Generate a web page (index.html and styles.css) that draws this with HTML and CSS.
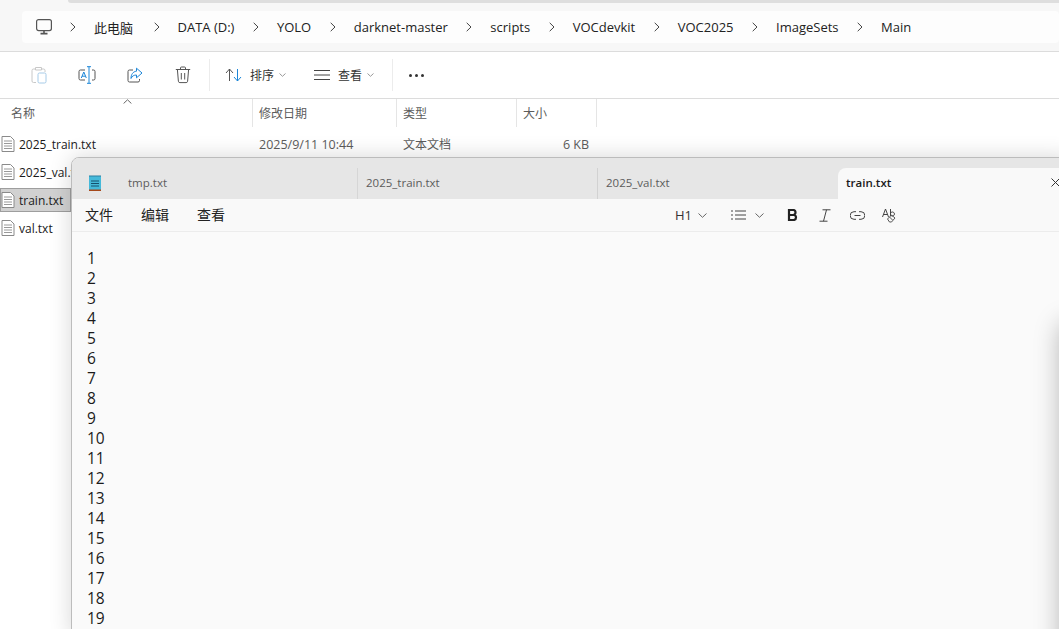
FILE: index.html
```html
<!DOCTYPE html>
<html lang="zh-CN">
<head>
<meta charset="UTF-8">
<meta name="viewport" content="width=device-width,initial-scale=1.0">
<title>train.txt</title>
<link rel="stylesheet" href="styles.css">
</head>
<body>

<!-- ===== explorer ===== -->
<div class="explorer">
  <div class="topbar">
    <div class="topline"></div>
    <div class="address">
      <svg class="pc" width="18" height="18" viewBox="0 0 18 18" fill="none" stroke="#555" stroke-width="1.2"><rect x="1.6" y="1.6" width="14.8" height="11" rx="2"/><path d="M5.5 15.6h7M9 12.6v3" stroke-width="1.6"/></svg>
      <span class="sep"><svg width="6" height="10" viewBox="0 0 6 10" fill="none" stroke="#444" stroke-width="1"><path d="M.7.8 5 5 .7 9.2"/></svg></span><span class="crumb crumb-root">此电脑</span>
      <span class="sep"><svg width="6" height="10" viewBox="0 0 6 10" fill="none" stroke="#444" stroke-width="1"><path d="M.7.8 5 5 .7 9.2"/></svg></span><span class="crumb">DATA (D:)</span>
      <span class="sep"><svg width="6" height="10" viewBox="0 0 6 10" fill="none" stroke="#444" stroke-width="1"><path d="M.7.8 5 5 .7 9.2"/></svg></span><span class="crumb">YOLO</span>
      <span class="sep"><svg width="6" height="10" viewBox="0 0 6 10" fill="none" stroke="#444" stroke-width="1"><path d="M.7.8 5 5 .7 9.2"/></svg></span><span class="crumb">darknet-master</span>
      <span class="sep"><svg width="6" height="10" viewBox="0 0 6 10" fill="none" stroke="#444" stroke-width="1"><path d="M.7.8 5 5 .7 9.2"/></svg></span><span class="crumb">scripts</span>
      <span class="sep"><svg width="6" height="10" viewBox="0 0 6 10" fill="none" stroke="#444" stroke-width="1"><path d="M.7.8 5 5 .7 9.2"/></svg></span><span class="crumb">VOCdevkit</span>
      <span class="sep"><svg width="6" height="10" viewBox="0 0 6 10" fill="none" stroke="#444" stroke-width="1"><path d="M.7.8 5 5 .7 9.2"/></svg></span><span class="crumb">VOC2025</span>
      <span class="sep"><svg width="6" height="10" viewBox="0 0 6 10" fill="none" stroke="#444" stroke-width="1"><path d="M.7.8 5 5 .7 9.2"/></svg></span><span class="crumb">ImageSets</span>
      <span class="sep"><svg width="6" height="10" viewBox="0 0 6 10" fill="none" stroke="#444" stroke-width="1"><path d="M.7.8 5 5 .7 9.2"/></svg></span><span class="crumb">Main</span>
    </div>
  </div>

  <div class="toolbar">
    <span class="tool tool-first">
      <svg width="16" height="18" viewBox="0 0 16 18" fill="none"><path d="M4 3H2.500A1.500 1.500 0 0 0 1 4.500V15a1.500 1.500 0 0 0 1.500 1.500H5M11 3h1.500A1.500 1.500 0 0 1 14 4.500V6M4.500 1.500h6V4h-6z" stroke="#c8c8c8"/><rect x="7" y="7" width="8" height="10" rx="1.500" stroke="#a6cbe8"/></svg>
    </span>
    <span class="tool">
      <svg width="18" height="18" viewBox="0 0 18 18" fill="none"><path d="M7 4H2.500A1.500 1.500 0 0 0 1 5.500v7A1.500 1.500 0 0 0 2.500 14H7M14 4h1.500A1.500 1.500 0 0 1 17 5.500v7a1.500 1.500 0 0 1-1.500 1.500H14" stroke="#555"/><path d="M9 .7h4M9 17.300h4M11 .7v16.600" stroke="#1b86d8"/><path d="M3.300 12 5.800 6l2.500 6M4.100 10.200h3.400" stroke="#1b86d8"/></svg>
    </span>
    <span class="tool">
      <svg width="16" height="16" viewBox="0 0 16 16" fill="none"><path d="M6 3H2.500A1.500 1.500 0 0 0 1 4.500v9A1.500 1.500 0 0 0 2.500 15h8.500a1.500 1.500 0 0 0 1.500-1.500V12" stroke="#555"/><path d="M9.500 1.200 15 6l-5.500 4.800V8C7 8 5 9 4 11.500 4 7.500 6 4.500 9.500 4.200z" stroke="#1b86d8" stroke-linejoin="round"/></svg>
    </span>
    <span class="tool">
      <svg width="16" height="18" viewBox="0 0 16 18" fill="none" stroke="#555"><path d="M.8 3.500h14.400M5.500 3.500V2a1 1 0 0 1 1-1h3a1 1 0 0 1 1 1v1.500M2.400 3.500l1 11.800a1.500 1.500 0 0 0 1.500 1.300h6.200a1.500 1.500 0 0 0 1.500-1.300l1-11.800M6.300 7v6.500M9.700 7v6.500"/></svg>
    </span>
    <span class="divider"></span>
    <span class="tool-text tool-sort">
      <svg width="17" height="14" viewBox="0 0 17 14" fill="none"><path d="M1 5 4.500 1 8 5M4.500 1v12" stroke="#555"/><path d="M9 9l3.500 4L16 9M12.500 13V1" stroke="#1b86d8"/></svg>
      <span>排序</span>
      <svg class="caret" width="7" height="4" viewBox="0 0 7 4" fill="none" stroke="#999"><path d="M.5.500l3 2.800 3-2.800"/></svg>
    </span>
    <span class="tool-text tool-view">
      <svg width="16" height="10" viewBox="0 0 16 10" fill="none" stroke="#444"><path d="M0 .5h16M0 5h16M0 9.500h16"/></svg>
      <span>查看</span>
      <svg class="caret" width="7" height="4" viewBox="0 0 7 4" fill="none" stroke="#999"><path d="M.5.500l3 2.800 3-2.800"/></svg>
    </span>
    <span class="divider divider-2"></span>
    <span class="more"><i></i><i></i><i></i></span>
  </div>

  <div class="header">
    <svg class="sort-up" width="9" height="5" viewBox="0 0 9 5" fill="none" stroke="#666"><path d="M.6 4.500 4.500.8l3.900 3.700"/></svg>
    <div class="col col-name">名称</div>
    <div class="col col-date">修改日期</div>
    <div class="col col-type">类型</div>
    <div class="col col-size">大小</div>
  </div>

  <div class="files">
    <div class="file">
      <svg class="doc" width="14" height="16" viewBox="0 0 14 16" fill="#fff" stroke="#8a8a8a"><path d="M1 .5h8.500L13 4v11.500H1z"/><path d="M3 5h8M3 7.500h8M3 10h8M3 12.500h8" stroke="#999"/></svg>
      <span class="fname">2025_train.txt</span><span class="fdate">2025/9/11 10:44</span><span class="ftype">文本文档</span><span class="fsize">6 KB</span>
    </div>
    <div class="file">
      <svg class="doc" width="14" height="16" viewBox="0 0 14 16" fill="#fff" stroke="#8a8a8a"><path d="M1 .5h8.500L13 4v11.500H1z"/><path d="M3 5h8M3 7.500h8M3 10h8M3 12.500h8" stroke="#999"/></svg>
      <span class="fname">2025_val.txt</span>
    </div>
    <div class="file selected">
      <svg class="doc" width="14" height="16" viewBox="0 0 14 16" fill="#fff" stroke="#8a8a8a"><path d="M1 .5h8.500L13 4v11.500H1z"/><path d="M3 5h8M3 7.500h8M3 10h8M3 12.500h8" stroke="#999"/></svg>
      <span class="fname">train.txt</span>
    </div>
    <div class="file">
      <svg class="doc" width="14" height="16" viewBox="0 0 14 16" fill="#fff" stroke="#8a8a8a"><path d="M1 .5h8.500L13 4v11.500H1z"/><path d="M3 5h8M3 7.500h8M3 10h8M3 12.500h8" stroke="#999"/></svg>
      <span class="fname">val.txt</span>
    </div>
  </div>
</div>

<!-- ===== notepad window ===== -->
<div class="notepad">
  <div class="tabs">
    <svg class="np-icon" width="12" height="16" viewBox="0 0 12 16"><rect x="0" y="1" width="12" height="14" fill="#45b9da"/><path d="M1 0v2M3 0v2M5 0v2M7 0v2M9 0v2M11 0v2" stroke="#2a7fa0"/><path d="M2 6h8M2 8.500h8M2 11h8" stroke="#14506e"/><path d="M0 15.300h12" stroke="#a5481a" stroke-width="1.400"/></svg>
    <div class="tab tab-1">tmp.txt</div>
    <div class="tab tab-2">2025_train.txt</div>
    <div class="tab tab-3">2025_val.txt</div>
    <div class="tab tab-active">train.txt
      <svg class="close" width="9" height="9" viewBox="0 0 9 9" fill="none" stroke="#333"><path d="M.5.500l8 8M8.500.500l-8 8"/></svg>
    </div>
  </div>
  <div class="menubar">
    <span class="menu">文件</span>
    <span class="menu">编辑</span>
    <span class="menu">查看</span>
    <div class="format">
      <span class="h1">H1</span>
      <svg class="chev" width="9" height="5" viewBox="0 0 9 5" fill="none" stroke="#666"><path d="M.5.500l4 3.800 4-3.800"/></svg>
      <svg class="list" width="15" height="10" viewBox="0 0 15 10" fill="none" stroke="#444"><path d="M0 1h2M4 1h11M0 5h2M4 5h11M0 9h2M4 9h11"/></svg>
      <svg class="chev" width="9" height="5" viewBox="0 0 9 5" fill="none" stroke="#666"><path d="M.5.500l4 3.800 4-3.800"/></svg>
      <svg class="bold" width="11" height="12" viewBox="0 0 10 12" fill="none" stroke="#222" stroke-width="2.200"><path d="M1.500 1h4a2.500 2.500 0 0 1 0 5h-4zM1.500 6h4.500a2.500 2.500 0 0 1 0 5H1.500z"/></svg>
      <svg class="italic" width="12" height="13" viewBox="0 0 12 13" fill="none" stroke="#444"><path d="M3.500.8h8M.5 12.200h8M7.500.8 4.500 12.200"/></svg>
      <svg class="link" width="15" height="9" viewBox="0 0 15 9" fill="none" stroke="#444"><path d="M6 .7H4a3.800 3.800 0 0 0 0 7.600h2M9 .7h2a3.800 3.800 0 0 1 0 7.600H9M4.500 4.500h6"/></svg>
      <svg class="spell" width="15" height="15" viewBox="0 0 15 15" fill="none" stroke="#444"><path d="M.5 9 3.500 1l3 8M1.500 6.500h4M8.500 1v7M8.500 5.500a2 2 0 1 1 0 1"/><path d="M5.500 11l4-4 3.500 3-3.500 4H7.500zM7.500 9l3 3" stroke="#555"/></svg>
    </div>
  </div>
  <div class="editor">
    <div>1</div><div>2</div><div>3</div><div>4</div><div>5</div>
    <div>6</div><div>7</div><div>8</div><div>9</div><div>10</div>
    <div>11</div><div>12</div><div>13</div><div>14</div><div>15</div>
    <div>16</div><div>17</div><div>18</div><div>19</div>
  </div>
  <div class="edge-shadow"></div>
</div>

</body>
</html>
```

FILE: styles.css
```css
/* ==== page ==== */
*{box-sizing:border-box;margin:0;padding:0}
html,body{height:100%}
body{
  position:relative;
  overflow:hidden;
  background:#fff;
  color:#1a1a1a;
  font-family:"Open Sans","Noto Sans CJK SC",sans-serif;
  font-size:13px;
}

/* ==== explorer ==== */
.explorer{height:100%}
.topbar{
  height:52px;
  padding:11px 0 0 22px;
  background:#f7f7f7;
  border-bottom:1px solid #dcdcdc;
  position:relative;
}
.topline{
  position:absolute;top:0;left:68px;right:0;height:3px;
  background:#dedede;
  border-bottom-left-radius:4px;
}
.address{
  display:flex;align-items:center;
  height:32px;
  padding-left:13px;
  background:#fdfdfd;
  border-radius:4px;
  font-size:13px;
  color:#222;
  white-space:nowrap;
}
.pc{margin-right:17px}
.sep{display:flex;align-items:center;margin-right:18px}
.crumb{margin-right:18.500px}
.crumb-root{margin-right:20.500px}

.toolbar{
  display:flex;align-items:center;
  height:47px;
  background:#fff;
  border-bottom:1px solid #dcdcdc;
  color:#333;
  font-size:12px;
}
.tool{display:flex;justify-content:center;width:48px}
.tool-first{margin-left:15px}
.divider{width:1px;height:32px;background:#ececec;margin:0 15px 0 2px}
.divider-2{margin:0 0 0 14px}
.tool-text{display:flex;align-items:center}
.tool-text svg:first-child{margin-right:8px}
.tool-text .caret{margin-left:5px}
.tool-sort{width:89px}
.tool-view{width:64px}
.tool-view svg:first-child{margin-right:8px}
.more{display:flex;gap:3px;margin-left:16px}
.more i{width:3px;height:3px;border-radius:50%;background:#333}

.header{
  display:flex;
  height:28px;
  position:relative;
  color:#5c5c5c;
  font-size:12px;
  line-height:30px;
}
.sort-up{position:absolute;left:123px;top:0}
.col{border-right:1px solid #e5e5e5;padding-left:6px}
.col-name{width:253px;padding-left:11px}
.col-date{width:144px}
.col-type{width:120px}
.col-size{width:80px}

.files{display:flex;flex-direction:column;gap:4px;padding-top:5px}
.file{
  display:flex;align-items:center;
  height:24px;
  padding-left:1px;
  font-size:13px;
  white-space:nowrap;
}
.file.selected{background:#d1d1d1;box-shadow:inset 0 0 0 1px #9e9e9e;margin-right:988px}
.doc{margin-right:4px;flex:none}
.fname{width:240px;font-size:12px}
.fdate{width:144px;color:#5c5c5c;font-size:12.500px}
.ftype{width:120px;color:#5c5c5c;font-size:12px}
.fsize{width:66px;text-align:right;color:#5c5c5c;font-size:12.500px}

/* ==== notepad ==== */
.notepad{
  position:absolute;
  left:71px;top:157px;
  width:1000px;height:480px;
  background:#fafafa;
  border:1px solid #bcbcbc;
  border-radius:8px 0 0 0;
  box-shadow:0 0 22px rgba(0,0,0,.16);
  overflow:hidden;
}
.tabs{
  display:flex;align-items:flex-end;
  height:41px;
  padding-left:16px;
  background:#e6e6e6;
  font-size:11.500px;
  color:#5c5c5c;
  position:relative;
}
.np-icon{position:absolute;left:17px;top:17px}
.tab{
  display:flex;align-items:center;
  flex:none;
  height:31px;
  width:240px;
  padding:0 0 2px 8px;
  border-right:1px solid #d2d2d2;
  white-space:nowrap;
}
.tab-1{width:270px;padding-left:40px;border-right-color:#d6d6d6}
.tab-3{border-right:0}
.tab-active{
  position:relative;
  background:#f9f9f9;
  border:0;
  border-radius:8px 8px 0 0;
  color:#1a1a1a;
  font-weight:600;
}
.close{position:absolute;left:213px;top:10px}

.menubar{
  display:flex;align-items:center;
  height:33px;
  padding:0 0 2px 13px;
  background:#f9f9f9;
  border-bottom:1px solid #ececec;
  color:#222;
  font-size:14px;
  position:relative;
}
.menu{margin-right:28px}
.format{
  display:flex;align-items:center;
  position:absolute;left:603px;top:0;height:32px;
}
.h1{width:23px;font-size:13px;color:#333}
.format .chev{margin-right:23px}
.format .chev:first-of-type{margin-right:24px}
.list{margin-right:9px}
.bold{margin-right:21px}
.italic{margin-right:19px}
.link{margin-right:17px}

.editor{
  padding:16px 0 0 15px;
  font-size:15.500px;
  line-height:20px;
  color:#1a1a1a;
}
.edge-shadow{
  position:absolute;left:988px;top:165px;
  width:60px;height:400px;
  background:#fff;
  border-radius:8px;
  box-shadow:0 0 26px rgba(0,0,0,.28);
}
```
